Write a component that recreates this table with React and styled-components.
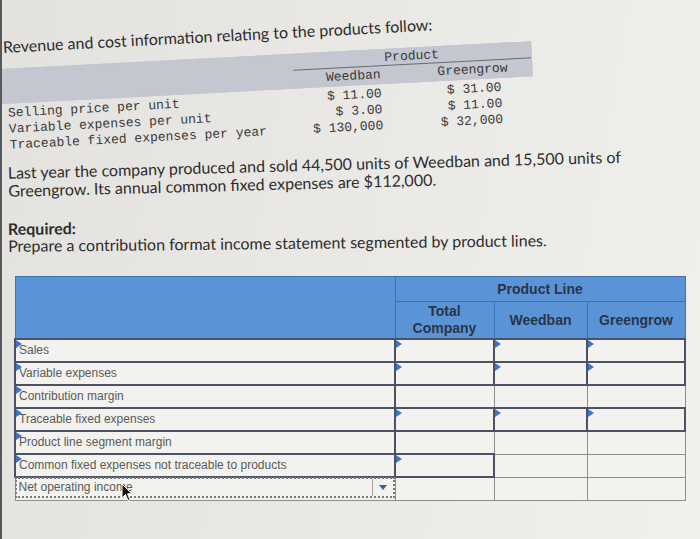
import React from 'react';
import styled, { createGlobalStyle, css } from 'styled-components';

const GlobalStyle = createGlobalStyle`
  html, body { margin: 0; padding: 0; }
  body {
    background: linear-gradient(100deg, #e3e2de 0%, #e9e8e4 45%, #f0f0ed 100%);
    font-family: Lato, "Liberation Sans", sans-serif;
  }
`;

const Page = styled.div`
  position: relative;
  box-sizing: border-box;
  width: 700px;
  height: 539px;
  overflow: hidden;
  border-left: 2px solid #55585c;
  padding: 38px 0 0 1px;
`;

const Tilt = styled.div`
  width: 640px;
  transform: rotate(${p => p.$deg}deg);
  transform-origin: left center;
  margin-top: ${p => p.$mt || 0}px;
`;

const Heading = styled.div`
  font-size: 16px;
  line-height: 18px;
  color: #2d2d2d;
  white-space: nowrap;
`;

const Info = styled.div`
  width: 530px;
  font-family: "Liberation Mono", "DejaVu Sans Mono", monospace;
  font-size: 13px;
  color: #3b3b3b;
`;

const InfoBand = styled.div`
  display: grid;
  grid-template-columns: 292px 120px 118px;
  grid-template-rows: 16px 17px;
  background-color: #c4c6d0;
  box-shadow: inset 0 0 0 40px #c4c6d0;
  border: 1px solid #c4c6d0;
  margin: -1px;
`;

const BandCell = styled.div`
  grid-column: ${p => p.$col};
  grid-row: ${p => p.$row};
  line-height: ${p => (p.$row === '1' ? 15 : 17)}px;
  text-align: ${p => p.$align || 'center'};
  padding-right: ${p => p.$pr || 0}px;
  ${p => p.$rule && css`border-bottom: 1.5px solid #6a6a6e;`}
`;

const InfoRows = styled.div`
  display: grid;
  grid-template-columns: 292px 120px 118px;
  grid-auto-rows: 16px;
  padding-top: 3px;
  line-height: 16px;
`;

const InfoText = styled.div`
  white-space: nowrap;
  text-align: ${p => p.$align || 'left'};
  padding-left: ${p => p.$pl || 0}px;
  padding-right: ${p => p.$pr || 0}px;
`;

const Para = styled.div`
  padding-left: 5px;
  font-size: 16px;
  line-height: ${p => p.$lh}px;
  color: #2d2d2d;
  white-space: nowrap;
`;

const Strong = styled.span`
  font-weight: 700;
`;

const Statement = styled.table`
  margin: 22px 0 0 11px;
  border-collapse: collapse;
  table-layout: fixed;
  width: 670px;
  font-family: "Liberation Sans", Arial, sans-serif;
`;

const HeadCell = styled.th`
  background: #5b94d6;
  border: 1px solid #4272b0;
  color: #28354a;
  font-size: 14px;
  font-weight: 700;
  line-height: 17px;
  height: ${p => p.$h}px;
  padding: 0;
  text-align: center;
`;

const Cell = styled.td`
  position: relative;
  height: 23px;
  box-sizing: border-box;
  padding: 0;
  background: #f3f2ee;
  border: ${p => (p.$input ? '2px solid #4a5264' : '1px solid #8e8e8e')};
  ${p =>
    p.$input &&
    css`
      &::before {
        content: '';
        position: absolute;
        left: 0;
        top: 0;
        border-left: 6px solid #3f74c2;
        border-top: 4px solid transparent;
        border-bottom: 4px solid transparent;
      }
    `}
`;

const LabelCell = styled(Cell)`
  vertical-align: top;
  padding: 3px 0 0 3px;
  font-size: 12px;
  line-height: 14px;
  color: #5a5a5a;
  white-space: nowrap;
`;

const SelectCell = styled(Cell)`
  vertical-align: top;
`;

const SelectBox = styled.div`
  display: flex;
  align-items: stretch;
  height: 21px;
  border: 2px dotted #7a7a7a;
  box-sizing: border-box;
  margin: -1px 0 -1px -1px;
`;

const SelectText = styled.span`
  flex: 1;
  padding: 1px 0 0 2px;
  font-size: 12px;
  line-height: 14px;
  color: #5a5a5a;
`;

const SelectButton = styled.span`
  width: 20px;
  border-left: 1px solid #a5a5a5;
  display: flex;
  align-items: center;
  justify-content: center;
  &::after {
    content: '';
    border-top: 5px solid #3a5f96;
    border-left: 4px solid transparent;
    border-right: 4px solid transparent;
  }
`;

const Cursor = styled.svg`
  position: absolute;
  left: 119px;
  top: 483px;
`;

const rows = [
  { label: 'Sales', inputs: [true, true, true] },
  { label: 'Variable expenses', inputs: [true, true, true] },
  { label: 'Contribution margin', inputs: [false, false, false] },
  { label: 'Traceable fixed expenses', inputs: [true, true, true] },
  { label: 'Product line segment margin', inputs: [false, false, false] },
  { label: 'Common fixed expenses not traceable to products', inputs: [true, false, false] },
  { label: 'Net operating income', inputs: [false, false, false], select: true },
];

const info = [
  ['Selling price per unit', '$ 11.00', '$ 31.00'],
  ['Variable expenses per unit', '$ 3.00', '$ 11.00'],
  ['Traceable fixed expenses per year', '$ 130,000', '$ 32,000'],
];

export default function App() {
  return (
    <>
      <GlobalStyle />
      <Page>
        <Tilt $deg={-3}>
          <Heading>Revenue and cost information relating to the products follow:</Heading>
        </Tilt>

        <Tilt $deg={-3} $mt={14}>
          <Info>
            <InfoBand>
              <BandCell $col="1" $row="1 / 3" />
              <BandCell $col="2 / 4" $row="1" $rule>Product</BandCell>
              <BandCell $col="2" $row="2" $align="right" $pr={33}>Weedban</BandCell>
              <BandCell $col="3" $row="2">Greengrow</BandCell>
            </InfoBand>
            <InfoRows>
              {info.map(r => (
                <React.Fragment key={r[0]}>
                  <InfoText $pl={5}>{r[0]}</InfoText>
                  <InfoText $align="right" $pr={33}>{r[1]}</InfoText>
                  <InfoText $align="right" $pr={31}>{r[2]}</InfoText>
                </React.Fragment>
              ))}
            </InfoRows>
          </Info>
        </Tilt>

        <Tilt $deg={-1.5} $mt={10}>
          <Para $lh={18}>
            Last year the company produced and sold 44,500 units of Weedban and 15,500 units of
            <br />
            Greengrow. Its annual common fixed expenses are $112,000.
          </Para>
        </Tilt>

        <Tilt $deg={-0.6} $mt={20}>
          <Para $lh={17}>
            <Strong>Required:</Strong>
            <br />
            Prepare a contribution format income statement segmented by product lines.
          </Para>
        </Tilt>

        <Statement>
          <colgroup>
            <col style={{ width: 380 }} />
            <col style={{ width: 99 }} />
            <col style={{ width: 93 }} />
            <col style={{ width: 98 }} />
          </colgroup>
          <thead>
            <tr>
              <HeadCell rowSpan={2} $h={24} />
              <HeadCell colSpan={3} $h={24}>Product Line</HeadCell>
            </tr>
            <tr>
              <HeadCell $h={36}>
                Total
                <br />
                Company
              </HeadCell>
              <HeadCell $h={36}>Weedban</HeadCell>
              <HeadCell $h={36}>Greengrow</HeadCell>
            </tr>
          </thead>
          <tbody>
            {rows.map(r => (
              <tr key={r.label}>
                {r.select ? (
                  <SelectCell>
                    <SelectBox>
                      <SelectText>{r.label}</SelectText>
                      <SelectButton />
                    </SelectBox>
                  </SelectCell>
                ) : (
                  <LabelCell $input>{r.label}</LabelCell>
                )}
                {r.inputs.map((inp, i) => (
                  <Cell key={i} $input={inp} />
                ))}
              </tr>
            ))}
          </tbody>
        </Statement>

        <Cursor width="12" height="19" viewBox="0 0 12 19">
          <path d="M1 1 L1 15 L4.5 11.5 L7 17.5 L9 16.6 L6.6 10.8 L11 10.8 Z" fill="#111" stroke="#fff" strokeWidth="1" />
        </Cursor>
      </Page>
    </>
  );
}
